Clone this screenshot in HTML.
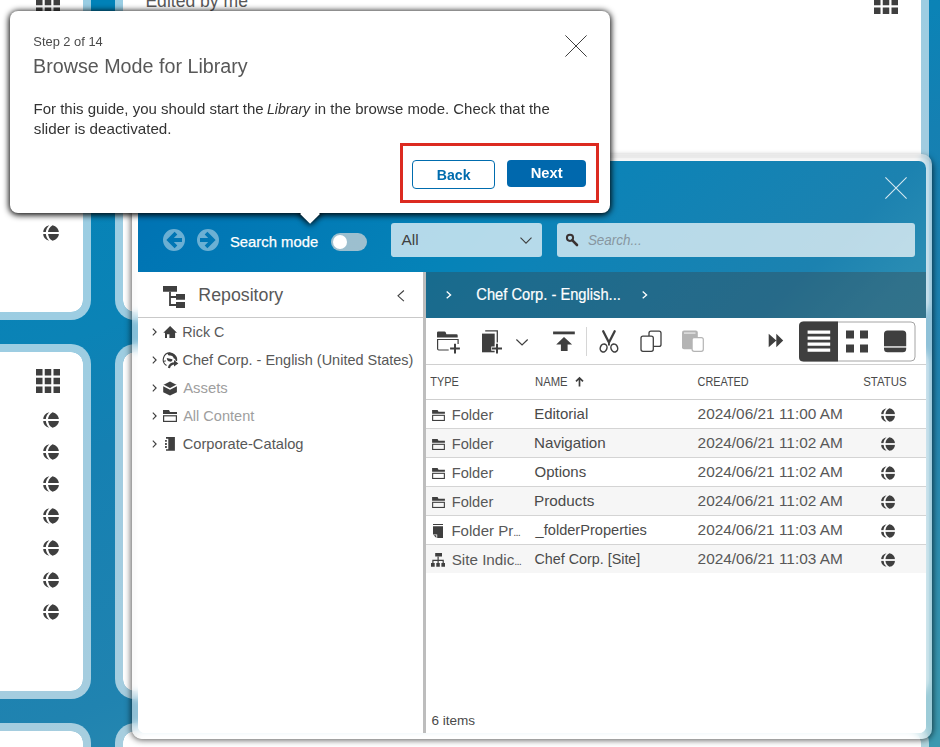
<!DOCTYPE html>
<html lang="en">
<head>
<meta charset="utf-8">
<title>Browse Mode for Library</title>
<style>
*{box-sizing:border-box;margin:0;padding:0}
html,body{width:940px;height:747px;overflow:hidden;background:#0b82b6}
body{font-family:"Liberation Sans",sans-serif;color:#3f3f3f;-webkit-font-smoothing:antialiased}
#root{position:absolute;left:0;top:0;width:940px;height:747px;overflow:hidden;
  background:linear-gradient(159deg,#0082b8 3.7%,#0b83b6 33%,#1580b2 44%,#2083b0 67%,#3b99b0 97.4%)}
#root *{position:absolute}
.card{background:#fff;background-clip:padding-box;border:8px solid rgba(255,255,255,.6);border-radius:20px}
.t{white-space:nowrap;line-height:1;display:block}
svg{display:block;overflow:visible}
.ic{fill:#3f3f3f}
/* window */
#winshadow{left:132px;top:158px;width:800px;height:581px;border-radius:10px;box-shadow:0 0 6px 1px rgba(0,0,0,.65)}
#win{left:132px;top:154px;width:800px;height:585px;border-radius:10px;background:rgba(255,255,255,.5);
  -webkit-backdrop-filter:blur(3px);backdrop-filter:blur(3px)}
#inner{left:138px;top:161px;width:788px;height:572px;border-radius:7px;overflow:hidden;background:#fff}
#hdr{left:0;top:0;width:788px;height:157px;overflow:hidden}
#hdrg{left:0;top:0;width:788px;height:572px;background:linear-gradient(135deg,#0070b1 0%,#0075b4 7.4%,#0583b8 29.6%,#0c83b7 35.7%,#1c82b0 57.4%,#298cb3 64.8%,#45a0ae 100%)}
.field{background:rgba(255,255,255,.7);border-radius:3px}
.hl{left:0;width:500px;height:1px;background:#d4d4d4}
.row{left:0;width:500px;height:29px}
.row.alt{background:#f6f6f6}
.lt{color:#4a4a4a}
</style>
</head>
<body>
<div id="root">

<!-- background cards -->
<div class="card" style="left:-20px;top:-35px;width:111px;height:355px"></div>
<div class="card" style="left:115px;top:-35px;width:814px;height:355px"></div>
<div class="card" style="left:-20px;top:344px;width:111px;height:355px"></div>
<div class="card" style="left:115px;top:344px;width:814px;height:355px"></div>
<div class="card" style="left:-20px;top:723px;width:111px;height:355px"></div>
<div class="card" style="left:115px;top:723px;width:814px;height:355px"></div>

<svg width="0" height="0" style="left:0;top:0">
  <defs>
    <symbol id="globe" viewBox="0 0 16 16">
      <path fill="#3f3f3f" d="M6.3 0.2A8 8 0 0 0 6.3 15.8A10.44 10.44 0 0 1 6.3 0.2zM9.6 0.16A8 8 0 0 1 9.6 15.84A9 9 0 0 1 9.6 0.16z"/>
      <rect x="-1" y="7" width="18" height="2" fill="#fff"/>
    </symbol>
    <symbol id="grid9" viewBox="0 0 24 24">
      <path fill="#3f3f3f" d="M0 0h6.5v6.5H0zM8.75 0h6.5v6.5h-6.5zM17.5 0H24v6.5h-6.5zM0 8.75h6.5v6.5H0zM8.75 8.75h6.5v6.5h-6.5zM17.5 8.75H24v6.5h-6.5zM0 17.5h6.5V24H0zM8.75 17.5h6.5V24h-6.5zM17.5 17.5H24V24h-6.5z"/>
    </symbol>
    <symbol id="folder" viewBox="0 0 14 12">
      <path fill="#3f3f3f" d="M0 0h6l1 2h7v2H0z"/>
      <rect x="0.6" y="5.8" width="12.8" height="5.6" fill="none" stroke="#3f3f3f" stroke-width="1.2"/>
    </symbol>
    <symbol id="chev" viewBox="0 0 5 8">
      <path d="M0.8 0.7L4.1 4L0.8 7.3" fill="none" stroke="#3f3f3f" stroke-width="1.15"/>
    </symbol>
  </defs>
</svg>

<!-- row 1 cards content -->
<svg style="left:36px;top:-10px" width="24" height="24"><use href="#grid9"/></svg>
<svg style="left:874px;top:-10px" width="24" height="24"><use href="#grid9"/></svg>
<span class="t" id="t_edited" style="left:145.43px;top:-7.54px;font-size:18px;color:#585858;transform:translateX(0.4px) scaleX(0.976);transform-origin:0 50%">Edited by me</span>
<svg style="left:43px;top:225px" width="16" height="16"><use href="#globe"/></svg>

<!-- row 2 left card -->
<svg style="left:36px;top:369px" width="24" height="24"><use href="#grid9"/></svg>
<svg style="left:43px;top:412px" width="16" height="16"><use href="#globe"/></svg>
<svg style="left:43px;top:444px" width="16" height="16"><use href="#globe"/></svg>
<svg style="left:43px;top:476px" width="16" height="16"><use href="#globe"/></svg>
<svg style="left:43px;top:508px" width="16" height="16"><use href="#globe"/></svg>
<svg style="left:43px;top:540px" width="16" height="16"><use href="#globe"/></svg>
<svg style="left:43px;top:572px" width="16" height="16"><use href="#globe"/></svg>
<svg style="left:43px;top:604px" width="16" height="16"><use href="#globe"/></svg>

<!-- WINDOW -->
<div id="winshadow"></div>
<div id="win"></div>
<div id="inner">
  <!-- coordinates inside #inner are page coords minus (138,161) -->
  <div id="hdr"><div id="hdrg"></div></div>
  <!-- header -->
  <svg style="left:747px;top:16px" width="22" height="22" viewBox="0 0 22 22"><path d="M0.4 0.4L21.6 21.6M21.6 0.4L0.4 21.6" stroke="rgba(255,255,255,.82)" stroke-width="1.1" fill="none"/></svg>
  <svg style="left:25px;top:68px" width="22" height="22" viewBox="0 0 22 22"><path fill="rgba(255,255,255,.42)" fill-rule="evenodd" d="M11 0a11 11 0 1 0 0 22a11 11 0 1 0 0-22zM3.4 11L11.6 2.8l2.7 2.7L10.8 9H19v4h-8.2l3.5 3.5l-2.7 2.7z"/></svg>
  <svg style="left:59px;top:68px" width="22" height="22" viewBox="0 0 22 22"><path fill="rgba(255,255,255,.42)" fill-rule="evenodd" d="M11 0a11 11 0 1 0 0 22a11 11 0 1 0 0-22zM18.6 11L10.4 2.8L7.7 5.5L11.2 9H3v4h8.2l-3.5 3.5l2.7 2.7z"/></svg>
  <span class="t" id="t_smode" style="left:91.43px;top:73.30px;font-size:15px;color:#fff;-webkit-text-stroke:0.25px #fff;transform:translateX(0.96px) scaleX(0.9884);transform-origin:0 50%">Search mode</span>
  <div style="left:193px;top:72px;width:36px;height:18px;border-radius:9px;background:rgba(216,216,216,.72)"></div>
  <div style="left:195px;top:74px;width:14px;height:14px;border-radius:7px;background:#fff"></div>
  <div class="field" style="left:253px;top:62px;width:151px;height:34px"></div>
  <span class="t" id="t_all" style="left:263.76px;top:71.30px;font-size:15px;transform:translateX(-0.52px) scaleX(1.0302);transform-origin:0 50%">All</span>
  <svg style="left:382px;top:75.5px" width="12" height="7" viewBox="0 0 12 7"><path d="M0.5 0.6L6 6.1L11.5 0.6" fill="none" stroke="#3f3f3f" stroke-width="1.1"/></svg>
  <div class="field" style="left:419px;top:62px;width:358px;height:34px"></div>
  <svg style="left:427px;top:72px" width="14" height="14" viewBox="0 0 14 14"><circle cx="5" cy="4.8" r="3.1" fill="none" stroke="#3a3232" stroke-width="2"/><path d="M7.4 7.3L12 12" stroke="#3a3232" stroke-width="2.6" stroke-linecap="round"/></svg>
  <span class="t" id="t_search" style="left:450.23px;top:71.00px;font-size:15px;font-style:italic;color:#8796a0;transform:translateX(-0.12px) scaleX(0.8953);transform-origin:0 50%">Search...</span>

  <!-- left panel -->
  <div style="left:0;top:111px;width:285px;height:461px;background:#fff"></div>
  <svg style="left:25px;top:125px" width="22" height="22" viewBox="0 0 22 22"><path fill="#3f3f3f" d="M0 0h14v5.7H0zM13 8.1h9v5.7h-9zM13 16.1h9v5.8h-9z"/><path d="M7 5.7V19h6M7 11h6" fill="none" stroke="#3f3f3f" stroke-width="1.8"/></svg>
  <span class="t" id="t_repo" style="left:60.77px;top:124.76px;font-size:18px;color:#585858;transform:translateX(-0.66px) scaleX(0.9862);transform-origin:0 50%">Repository</span>
  <svg style="left:258.5px;top:128.5px" width="8" height="12" viewBox="0 0 8 12"><path d="M6.9 0.5L1 5.8L6.9 11.1" fill="none" stroke="#3f3f3f" stroke-width="1.1"/></svg>
  <div style="left:0;top:156px;width:285px;height:1px;background:#c9c9c9"></div>

  <!-- tree -->
  <svg style="left:13.5px;top:166.6px" width="5" height="8"><use href="#chev"/></svg>
  <svg style="left:13.5px;top:194.6px" width="5" height="8"><use href="#chev"/></svg>
  <svg style="left:13.5px;top:222.6px" width="5" height="8"><use href="#chev"/></svg>
  <svg style="left:13.5px;top:250.6px" width="5" height="8"><use href="#chev"/></svg>
  <svg style="left:13.5px;top:278.6px" width="5" height="8"><use href="#chev"/></svg>
  <!-- home -->
  <svg style="left:25px;top:165px" width="14" height="13" viewBox="0 0 14 13"><path fill="#3f3f3f" d="M7.1 0.1L14 6.8h-1.9V12.1H6.4V8.2H4v3.9H2V6.8H0.3z"/></svg>
  <!-- site -->
  <svg style="left:24px;top:191px" width="17" height="17" viewBox="162 352 17 17">
    <path d="M170.3 352.9A6.8 6.8 0 0 0 166.5 365.5" fill="none" stroke="#3f3f3f" stroke-width="1.1"/>
    <path fill="#3f3f3f" d="M167.3 353.2A7.1 7.1 0 0 1 177.1 361H175.7C175.6 359.3 174.8 358.3 173.8 358.5C173.4 356.6 171.6 355.3 169.8 355.5C168.7 355.6 167.8 355 167.3 353.2z"/>
    <path fill="#3f3f3f" d="M166.8 357.9L172.4 359.3C172.7 361 171.3 362 169.7 361.6C168 361.2 166.7 359.7 166.8 357.9z"/>
    <path d="M163.2 361.4L165.9 360.9" fill="none" stroke="#3f3f3f" stroke-width="1"/>
    <path d="M168.9 367.9C169.6 364.9 171.8 363.4 175 363.4" fill="none" stroke="#3f3f3f" stroke-width="2.2"/>
    <path fill="#3f3f3f" d="M174 360.1L178.3 363.5L174 366.6z"/>
  </svg>
  <!-- assets -->
  <svg style="left:25px;top:219.5px" width="14" height="15" viewBox="0 0 14 15"><path fill="#3f3f3f" d="M7 0.5L13.9 3.9V11.2L7 14.4L0.2 11.2V3.9z"/><path d="M0 4.3L7 7.95L14 4.3" fill="none" stroke="#fff" stroke-width="1.6"/></svg>
  <!-- all content -->
  <svg style="left:25px;top:249px" width="14" height="12"><use href="#folder"/></svg>
  <!-- catalog -->
  <svg style="left:26px;top:275px" width="12" height="16" viewBox="164 436 12 16"><path fill="#3f3f3f" d="M166 437.1H174.9V450.8H166V449.2H168.3V438.8H166zM165.1 440h1.7v1.8h-1.7zM165.1 443.1h1.7v1.8h-1.7zM165.1 446.1h1.7v1.8h-1.7z"/></svg>
  <span class="t" id="t_tr1" style="left:44.30px;top:163.00px;font-size:15px;color:#585858;transform:translateX(0.25px) scaleX(0.9549);transform-origin:0 50%">Rick C</span>
  <span class="t" id="t_tr2" style="left:44.76px;top:191.00px;font-size:15px;color:#585858;transform:translateX(-0.43px) scaleX(0.9645);transform-origin:0 50%">Chef Corp. - English (United States)</span>
  <span class="t" id="t_tr3" style="left:45.11px;top:219.00px;font-size:15px;color:#9e9e9e;transform:translateX(0.18px) scaleX(0.9911);transform-origin:0 50%">Assets</span>
  <span class="t" id="t_tr4" style="left:45.12px;top:247.00px;font-size:15px;color:#9e9e9e;transform:translateX(0.17px) scaleX(0.9691);transform-origin:0 50%">All Content</span>
  <span class="t" id="t_tr5" style="left:44.75px;top:275.00px;font-size:15px;color:#585858;transform:translateX(-0.29px) scaleX(0.9786);transform-origin:0 50%">Corporate-Catalog</span>

  <!-- splitter -->
  <div style="left:285px;top:111px;width:3px;height:461px;background:#bdbdbd"></div>

  <!-- right panel: coords = page minus (426,272) -->
  <div id="rp" style="left:288px;top:111px;width:500px;height:461px">
    <div style="left:0;top:0;width:500px;height:45.5px;background:rgba(63,63,63,.34)"></div>
    <div style="left:0;top:45.5px;width:500px;height:416px;background:#fff"></div>
    <!-- breadcrumb -->
    <svg style="left:20px;top:19px" width="6" height="8" viewBox="0 0 6 8"><path d="M0.7 0.5L4.6 3.9L0.7 7.3" fill="none" stroke="#fff" stroke-width="1.3"/></svg>
    <span class="t" id="t_bc" style="left:50.27px;top:14.66px;font-size:16px;color:#fff;transform:translateX(0.32px) scaleX(0.9180);transform-origin:0 50%;-webkit-text-stroke:0.2px #fff">Chef Corp. - English...</span>
    <svg style="left:216px;top:19px" width="6" height="8" viewBox="0 0 6 8"><path d="M0.7 0.5L4.6 3.9L0.7 7.3" fill="none" stroke="#fff" stroke-width="1.3"/></svg>

    <!-- toolbar (svg uses page coordinates) -->
    <svg style="left:0;top:45.5px" width="500" height="47" viewBox="426 317.5 500 47">
      <g fill="#3f3f3f" stroke="none">
        <path d="M437 332.3q0-1.2 1.2-1.2h6.3q1 0 1.3 0.9l0.6 1.7h10.1q1.2 0 1.2 1.2V337H437z"/>
        <path d="M448.7 349.5H438.8q-1.2 0-1.2-1.2V339H458.1V343.6" fill="none" stroke="#3f3f3f" stroke-width="1.2"/>
        <path d="M455 343.2V353M450.1 348.1H459.9" fill="none" stroke="#3f3f3f" stroke-width="2"/>
        <path d="M485.2 330.4H497.3V342" fill="none" stroke="#3f3f3f" stroke-width="1.3"/>
        <rect x="482" y="333.1" width="12.7" height="18.7"/>
        <path d="M497 342.5V353.8M491.3 348.1H502.6" fill="none" stroke="#fff" stroke-width="4.2"/>
        <path d="M497 343.2V353M492 348.1H502" fill="none" stroke="#3f3f3f" stroke-width="2"/>
        <path d="M516.4 339L522.05 344.5L527.7 339" fill="none" stroke="#3f3f3f" stroke-width="1.2"/>
        <rect x="553.1" y="331" width="21.7" height="2.8"/>
        <path d="M564 336.5L572.1 344H567.6V350.6H560.9V344H556.2z"/>
        <rect x="586" y="326.5" width="1" height="29" fill="#d6d6d6"/>
        <path d="M603.2 330.7L608.7 341.6M614.7 330.7L609.2 341.6" fill="none" stroke="#3f3f3f" stroke-width="2.3" stroke-linecap="round"/>
        <path d="M608.95 339.5V345" fill="none" stroke="#3f3f3f" stroke-width="1.9"/>
        <ellipse cx="603.6" cy="347.5" rx="3.3" ry="4" transform="rotate(22 603.6 347.5)" fill="none" stroke="#3f3f3f" stroke-width="1.5"/>
        <ellipse cx="614.3" cy="347.5" rx="3.3" ry="4" transform="rotate(-22 614.3 347.5)" fill="none" stroke="#3f3f3f" stroke-width="1.5"/>
        <rect x="649" y="330.7" width="12" height="15.2" rx="2" fill="#fff" stroke="#3f3f3f" stroke-width="1.3"/>
        <rect x="641" y="335.6" width="12.3" height="15.2" rx="2" fill="#fff" stroke="#3f3f3f" stroke-width="1.3"/>
        <rect x="682" y="330.1" width="15.8" height="18.7" rx="2" fill="#b4b4b4"/>
        <rect x="684" y="332.1" width="11.5" height="0.9" fill="#fff"/>
        <rect x="692.1" y="337.1" width="11.2" height="13.7" rx="2" fill="#fff" stroke="#b4b4b4" stroke-width="1.2"/>
        <path d="M768.7 333.2L776.3 339.95L768.7 346.7zM776.3 333.2L783.2 339.95L776.3 346.7z"/>
        <rect x="799.5" y="321.5" width="115.5" height="39" rx="4" fill="#fff" stroke="#a4a4a4" stroke-width="1"/>
        <path d="M803.5 321H838V361H803.5q-4.5 0-4.5-4.5V325.5q0-4.5 4.5-4.5z"/>
        <path fill="#fff" d="M807.6 330h22.6v3.2h-22.6zM807.6 336h22.6v3.2h-22.6zM807.6 342h22.6v3.2h-22.6zM807.6 348h22.6v3.2h-22.6z"/>
        <path d="M846 330h8v8h-8zM860 330h8v8h-8zM846 344h8v8h-8zM860 344h8v8h-8z"/>
        <rect x="884" y="330" width="22.2" height="21.8" rx="3.5"/>
        <rect x="883" y="345.8" width="24" height="1.3" fill="#fff"/>
      </g>
    </svg>
    <div class="hl" style="top:92px;background:#d0d0d0"></div>

    <!-- grid header -->
    <span class="t lt" id="t_h1" style="left:4.05px;top:104.14px;font-size:12px;transform:translateX(0.28px) scaleX(0.9124);transform-origin:0 50%">TYPE</span>
    <span class="t lt" id="t_h2" style="left:108.99px;top:104.14px;font-size:12px;transform:translateX(0.06px) scaleX(0.9395);transform-origin:0 50%">NAME</span>
    <svg style="left:149px;top:105px" width="9" height="10" viewBox="0 0 9 10"><path d="M4.5 9.5V1.2M1 4.3L4.5 0.9L8 4.3" fill="none" stroke="#3f3f3f" stroke-width="1.7"/></svg>
    <span class="t lt" id="t_h3" style="left:271.87px;top:104.14px;font-size:12px;transform:translateX(-0.38px) scaleX(0.9048);transform-origin:0 50%">CREATED</span>
    <span class="t lt" id="t_h4" style="left:437.42px;top:104.14px;font-size:12px;transform:translateX(0.24px) scaleX(0.9514);transform-origin:0 50%">STATUS</span>
    <div class="hl" style="top:127px;background:#cfcfcf"></div>
    <div class="hl" style="top:156px"></div>
    <svg style="left:5.5px;top:137.6px" width="13" height="11"><use href="#folder"/></svg>
    <span class="t lt" id="t_r0a" style="left:25.42px;top:135.00px;font-size:15px;transform:translateX(0.76px) scaleX(0.9766);transform-origin:0 50%;color:#585858">Folder</span>
    <span class="t lt" id="t_r0b" style="left:107.84px;top:133.50px;font-size:15px;transform:translateX(0.17px) scaleX(0.9977);transform-origin:0 50%">Editorial</span>
    <span class="t lt" id="t_r0c" style="left:271.45px;top:133.50px;font-size:15px;transform:translateX(0.58px) scaleX(1.0267);transform-origin:0 50%;color:#585858">2024/06/21 11:00 AM</span>
    <svg style="left:455px;top:136px" width="14" height="14"><use href="#globe"/></svg>
    <div class="row alt" style="top:157px;height:28px"></div>
    <div class="hl" style="top:185px"></div>
    <svg style="left:5.5px;top:166.6px" width="13" height="11"><use href="#folder"/></svg>
    <span class="t lt" id="t_r1a" style="left:25.42px;top:164.00px;font-size:15px;transform:translateX(0.76px) scaleX(0.9768);transform-origin:0 50%;color:#585858">Folder</span>
    <span class="t lt" id="t_r1b" style="left:107.82px;top:162.50px;font-size:15px;transform:translateX(0.04px) scaleX(1.0108);transform-origin:0 50%">Navigation</span>
    <span class="t lt" id="t_r1c" style="left:271.43px;top:162.50px;font-size:15px;transform:translateX(0.57px) scaleX(1.0268);transform-origin:0 50%;color:#585858">2024/06/21 11:02 AM</span>
    <svg style="left:455px;top:165px" width="14" height="14"><use href="#globe"/></svg>
    <div class="hl" style="top:214px"></div>
    <svg style="left:5.5px;top:195.6px" width="13" height="11"><use href="#folder"/></svg>
    <span class="t lt" id="t_r2a" style="left:25.42px;top:193.00px;font-size:15px;transform:translateX(0.76px) scaleX(0.9766);transform-origin:0 50%;color:#585858">Folder</span>
    <span class="t lt" id="t_r2b" style="left:108.55px;top:191.50px;font-size:15px;transform:translateX(-0.47px) scaleX(0.9995);transform-origin:0 50%">Options</span>
    <span class="t lt" id="t_r2c" style="left:271.45px;top:191.50px;font-size:15px;transform:translateX(0.58px) scaleX(1.0267);transform-origin:0 50%;color:#585858">2024/06/21 11:02 AM</span>
    <svg style="left:455px;top:194px" width="14" height="14"><use href="#globe"/></svg>
    <div class="row alt" style="top:215px;height:28px"></div>
    <div class="hl" style="top:243px"></div>
    <svg style="left:5.5px;top:224.6px" width="13" height="11"><use href="#folder"/></svg>
    <span class="t lt" id="t_r3a" style="left:25.42px;top:222.00px;font-size:15px;transform:translateX(0.76px) scaleX(0.9768);transform-origin:0 50%;color:#585858">Folder</span>
    <span class="t lt" id="t_r3b" style="left:107.81px;top:220.50px;font-size:15px;transform:translateX(0.03px) scaleX(1.0184);transform-origin:0 50%">Products</span>
    <span class="t lt" id="t_r3c" style="left:271.43px;top:220.50px;font-size:15px;transform:translateX(0.57px) scaleX(1.0268);transform-origin:0 50%;color:#585858">2024/06/21 11:02 AM</span>
    <svg style="left:455px;top:223px" width="14" height="14"><use href="#globe"/></svg>
    <div class="hl" style="top:272px"></div>
    <svg style="left:7px;top:252px" width="10" height="14" viewBox="0 0 10 14"><rect x="0" y="0" width="10" height="1" fill="#3f3f3f"/><path fill="#3f3f3f" d="M0 2.2h10V14H4.2V10.5H0z"/><path fill="#3f3f3f" d="M0.6 11.3h2.8v2.7z"/></svg>
    <span class="t lt" id="t_r4a" style="left:25.34px;top:251.00px;font-size:15px;transform:translateX(0.43px) scaleX(1.0019);transform-origin:0 50%;color:#585858">Folder Pr<span style="position:static;font-size:11px;letter-spacing:-0.8px">...</span></span>
    <span class="t lt" id="t_r4b" style="left:109.87px;top:249.50px;font-size:15px;transform:translateX(-0.42px) scaleX(0.9737);transform-origin:0 50%">_folderProperties</span>
    <span class="t lt" id="t_r4c" style="left:271.45px;top:249.50px;font-size:15px;transform:translateX(0.58px) scaleX(1.0267);transform-origin:0 50%;color:#585858">2024/06/21 11:03 AM</span>
    <svg style="left:455px;top:252px" width="14" height="14"><use href="#globe"/></svg>
    <div class="row alt" style="top:273px;height:28px"></div>
    <svg style="left:5px;top:281px" width="14" height="14" viewBox="0 0 14 14"><path fill="#3f3f3f" d="M4.2 0h6.8v3.5H4.2zM0 10h3.7v3.8H0zM5.3 10h3.5v3.8H5.3zM10.4 10h3.6v3.8h-3.6z"/><path d="M7.1 3.5V10M1.9 10V7.4H12.2V10" fill="none" stroke="#3f3f3f" stroke-width="1.2"/></svg>
    <span class="t lt" id="t_r5a" style="left:25.66px;top:280.00px;font-size:15px;transform:translateX(-0.31px) scaleX(1.0146);transform-origin:0 50%;color:#585858">Site Indic<span style="position:static;font-size:11px;letter-spacing:-0.8px">...</span></span>
    <span class="t lt" id="t_r5b" style="left:108.47px;top:278.50px;font-size:15px;transform:translateX(0.54px) scaleX(0.9538);transform-origin:0 50%">Chef Corp. [Site]</span>
    <span class="t lt" id="t_r5c" style="left:271.43px;top:278.50px;font-size:15px;transform:translateX(0.57px) scaleX(1.0268);transform-origin:0 50%;color:#585858">2024/06/21 11:03 AM</span>
    <svg style="left:455px;top:281px" width="14" height="14"><use href="#globe"/></svg>
    <span class="t lt" id="t_items" style="left:5.32px;top:441.50px;font-size:13px;transform:translateX(0.48px) scaleX(1.0416);transform-origin:0 50%">6 items</span>
  </div>
</div>

<!-- POPUP (page coordinates) -->
<div id="pop" style="left:10px;top:11px;width:600px;height:202px;background:#fff;border-radius:8px;box-shadow:0 1px 6px 1px #000"></div>
<div style="left:285px;top:213px;width:50px;height:24px;overflow:hidden"><div style="left:17.93px;top:-6.2px;width:14.14px;height:14.14px;background:#fff;transform:rotate(45deg);box-shadow:0 0 6px 1px #000"></div></div>
<div style="left:296px;top:205px;width:28px;height:8px;background:#fff"></div>
<span class="t" id="t_step" style="left:32.75px;top:35.00px;font-size:13px;color:#4a4a4a;transform:translateX(0.32px) scaleX(0.9898);transform-origin:0 50%">Step 2 of 14</span>
<span class="t" id="t_title" style="left:33.63px;top:56.07px;font-size:20px;color:#585858;transform:translateX(-1.00px) scaleX(0.9854);transform-origin:0 50%">Browse Mode for Library</span>
<span class="t" id="t_b1a" style="left:33.18px;top:100.80px;font-size:15px;color:#333;transform:translateX(0.47px) scaleX(1.0001);transform-origin:0 50%">For this guide, you should start the</span>
<span class="t" id="t_b1b" style="left:266.87px;top:100.80px;font-size:15px;color:#333;font-style:italic;transform:translateX(-0.03px) scaleX(0.9420);transform-origin:0 50%">Library</span>
<span class="t" id="t_b1c" style="left:314.62px;top:100.80px;font-size:15px;color:#333;transform:translateX(-0.58px) scaleX(0.9973);transform-origin:0 50%">in the browse mode. Check that the</span>
<span class="t" id="t_b2" style="left:33.72px;top:121.00px;font-size:15px;color:#333;transform:translateX(-0.16px) scaleX(1.0132);transform-origin:0 50%">slider is deactivated.</span>
<svg style="left:564.5px;top:35px" width="22" height="22" viewBox="0 0 22 22"><path d="M0.4 0.4L21.6 21.6M21.6 0.4L0.4 21.6" stroke="#3f3f3f" stroke-width="1" fill="none"/></svg>
<div style="left:400px;top:143px;width:199px;height:60px;border:3px solid #dc2a20"></div>
<div style="left:412px;top:160px;width:83px;height:29px;border:1px solid #006cae;border-radius:4px;background:#fff"></div>
<span class="t" id="t_back" style="left:437.20px;top:166.88px;font-size:15.5px;font-weight:bold;color:#006cae;transform:translateX(-0.21px) scaleX(0.9110);transform-origin:0 50%">Back</span>
<div style="left:507px;top:160px;width:79px;height:27px;border-radius:4px;background:#0068ad"></div>
<span class="t" id="t_next" style="left:530.26px;top:165.08px;font-size:15.5px;font-weight:bold;color:#fff;transform:translateX(0.64px) scaleX(0.9515);transform-origin:0 50%">Next</span>

</div>
</body>
</html>
